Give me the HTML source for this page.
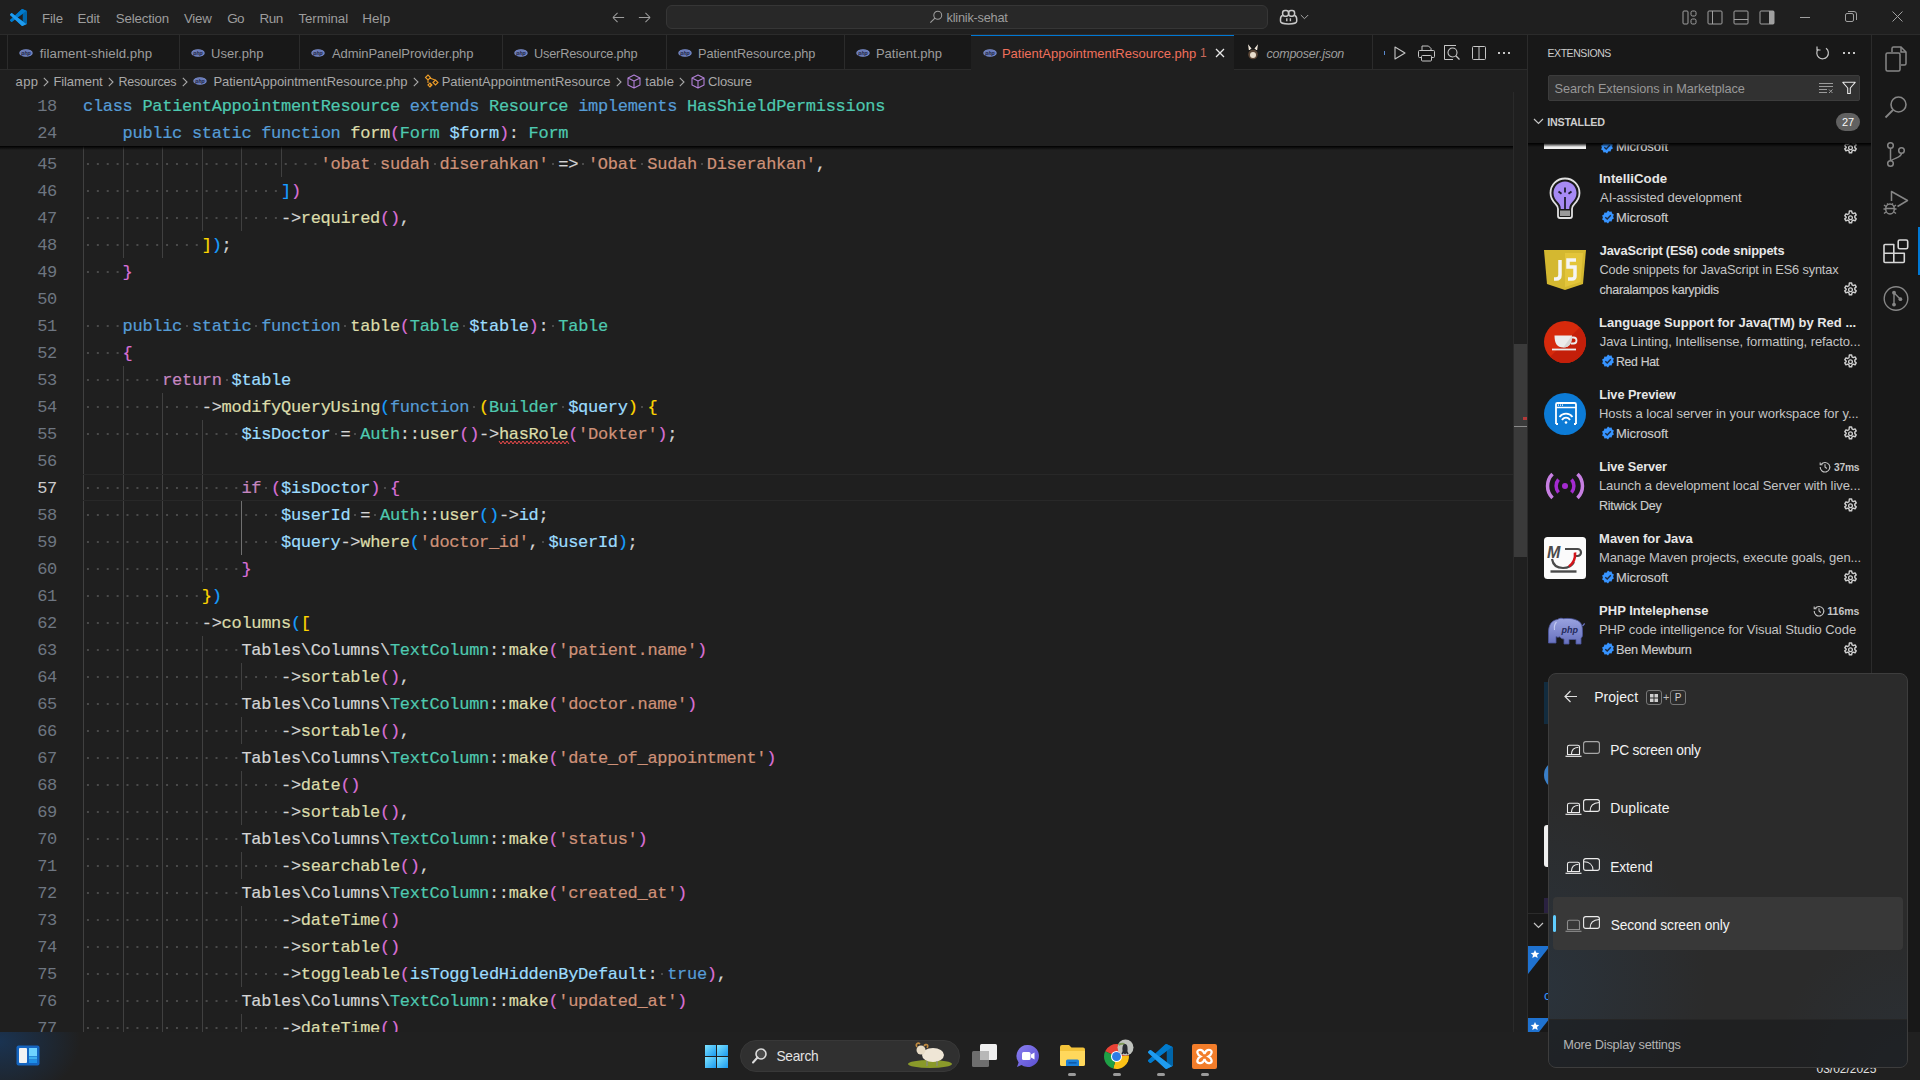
<!DOCTYPE html>
<html><head><meta charset="utf-8"><style>
*{box-sizing:border-box}
html,body{margin:0;padding:0}
body{width:1920px;height:1080px;overflow:hidden;background:#1f1f1f;position:relative;font-family:"Liberation Sans",sans-serif;color:#cccccc}
.a{position:absolute}
.code{position:absolute;left:0;height:27px;font-family:"Liberation Mono",monospace;font-size:17px;line-height:27px;letter-spacing:-0.3px;white-space:pre;-webkit-text-stroke:0.2px currentColor}
.ln{position:absolute;left:0;width:57px;text-align:right;height:27px;font-family:"Liberation Mono",monospace;font-size:17px;line-height:27px;letter-spacing:-0.3px;color:#6e7681}
.txt{position:absolute;left:83px;top:0}
.g{position:absolute;width:1px;background:#404040}
.ws{position:absolute;height:2px;background-image:linear-gradient(90deg,transparent 3.95px,#4a4a4a 3.95px,#4a4a4a 5.95px,transparent 5.95px);background-size:9.9px 2px;background-repeat:repeat-x}
svg{position:absolute;overflow:visible}
</style></head><body>
<div class="a" style="left:0;top:0;width:1920px;height:35px;background:#1f1f1f;border-bottom:1px solid #2b2b2b"></div><svg style="left:10px;top:9px" width="17" height="17" viewBox="0 0 100 100"><path fill="#0065a9" d="M96.5 10.8 75.9.9a6.2 6.2 0 0 0-7.1 1.2L29.4 38 12.2 25a4.2 4.2 0 0 0-5.3.2L1.4 30.2a4.2 4.2 0 0 0 0 6.2L16.3 50 1.4 63.6a4.2 4.2 0 0 0 0 6.2l5.5 5a4.2 4.2 0 0 0 5.3.2l17.2-13 39.4 35.9a6.2 6.2 0 0 0 7.1 1.2l20.6-9.9a6.2 6.2 0 0 0 3.5-5.6V16.4a6.2 6.2 0 0 0-3.5-5.6ZM75 72.7 45.1 50 75 27.3Z"/><path fill="#007acc" d="M96.5 10.8 75.9.9a6.2 6.2 0 0 0-7.1 1.2L1.4 63.6a4.2 4.2 0 0 0 0 6.2l5.5 5a4.2 4.2 0 0 0 5.3.2L93.4 13.5a4.2 4.2 0 0 1 6.6 3.3v-.4a6.2 6.2 0 0 0-3.5-5.6Z"/><path fill="#1f9cf0" d="M96.5 89.2 75.9 99.1a6.2 6.2 0 0 1-7.1-1.2L1.4 36.4a4.2 4.2 0 0 1 0-6.2l5.5-5a4.2 4.2 0 0 1 5.3-.2l81.2 61.5a4.2 4.2 0 0 0 6.6-3.3v.4a6.2 6.2 0 0 1-3.5 5.6Z"/></svg><div class="a" style="left:42.00px;top:19px;font-size:13.25px;line-height:0;white-space:pre;color:#9d9d9d;letter-spacing:-0.100px;">File</div><div class="a" style="left:77.60px;top:19px;font-size:13.25px;line-height:0;white-space:pre;color:#9d9d9d;letter-spacing:-0.200px;">Edit</div><div class="a" style="left:115.70px;top:19px;font-size:13.25px;line-height:0;white-space:pre;color:#9d9d9d;letter-spacing:-0.125px;">Selection</div><div class="a" style="left:184.00px;top:19px;font-size:13.25px;line-height:0;white-space:pre;color:#9d9d9d;letter-spacing:-0.233px;">View</div><div class="a" style="left:227.20px;top:19px;font-size:13.5px;line-height:0;white-space:pre;color:#9d9d9d;letter-spacing:-0.700px;">Go</div><div class="a" style="left:259.50px;top:19px;font-size:13.5px;line-height:0;white-space:pre;color:#9d9d9d;letter-spacing:-0.500px;">Run</div><div class="a" style="left:298.50px;top:19px;font-size:13.25px;line-height:0;white-space:pre;color:#9d9d9d;letter-spacing:-0.071px;">Terminal</div><div class="a" style="left:362.20px;top:19px;font-size:13.5px;line-height:0;white-space:pre;color:#9d9d9d;letter-spacing:0.067px;">Help</div><svg style="left:611px;top:10px" width="15" height="15" viewBox="0 0 16 16"><path d="M2 8h12M2 8l5-5M2 8l5 5" stroke="#9d9d9d" stroke-width="1.1" fill="none"/></svg><svg style="left:637px;top:10px" width="15" height="15" viewBox="0 0 16 16"><path d="M14 8H2M14 8l-5-5M14 8l-5 5" stroke="#9d9d9d" stroke-width="1.1" fill="none"/></svg><div class="a" style="left:666px;top:5px;width:602px;height:24px;background:#282828;border:1px solid #363636;border-radius:6px"></div><svg style="left:929px;top:10px" width="14" height="14" viewBox="0 0 16 16"><circle cx="10" cy="6" r="4.5" stroke="#9d9d9d" stroke-width="1.2" fill="none"/><path d="M6.8 9.2 1.5 14.5" stroke="#9d9d9d" stroke-width="1.3"/></svg><div class="a" style="left:946.60px;top:18px;font-size:12.75px;line-height:0;white-space:pre;color:#9d9d9d;letter-spacing:-0.236px;">klinik-sehat</div><svg style="left:1279px;top:9px" width="20" height="17" viewBox="0 0 20 17"><rect x="3.6" y="1.6" width="6" height="5.6" rx="2.4" stroke="#c8c8c8" stroke-width="1.5" fill="none"/><rect x="9.6" y="1.6" width="6" height="5.6" rx="2.4" stroke="#c8c8c8" stroke-width="1.5" fill="none"/><path d="M3.6 6.5C2 7 1.5 8.5 1.5 10v2.2c0 1.6 3.8 2.8 8.1 2.8s8.1-1.2 8.1-2.8V10c0-1.5-.5-3-2.1-3.5" stroke="#c8c8c8" stroke-width="1.5" fill="none"/><path d="M7.8 9.2v3M11.4 9.2v3" stroke="#c8c8c8" stroke-width="1.4"/></svg><svg style="left:1300px;top:14px" width="9" height="6" viewBox="0 0 9 6"><path d="M.8 1l3.7 3.7L8.2 1" stroke="#a8a8a8" stroke-width="1" fill="none"/></svg><svg style="left:1682px;top:10px" width="15" height="15" viewBox="0 0 15 15"><rect x="1" y="1" width="5" height="13" rx="1" stroke="#a0a0a0" fill="none"/><rect x="9" y="1" width="5" height="5" rx="1.5" stroke="#a0a0a0" fill="none"/><rect x="9" y="9" width="5" height="5" rx="1.5" stroke="#a0a0a0" fill="none"/></svg><svg style="left:1707px;top:10px" width="16" height="15" viewBox="0 0 16 15"><rect x="1" y="1" width="14" height="13" rx="1" stroke="#a0a0a0" fill="none"/><path d="M5.5 1v13" stroke="#a0a0a0"/></svg><svg style="left:1733px;top:10px" width="16" height="15" viewBox="0 0 16 15"><rect x="1" y="1" width="14" height="13" rx="1" stroke="#a0a0a0" fill="none"/><path d="M1 9.5h14" stroke="#a0a0a0"/></svg><svg style="left:1759px;top:10px" width="16" height="15" viewBox="0 0 16 15"><rect x="1" y="1" width="14" height="13" rx="1" stroke="#a0a0a0" fill="none"/><rect x="10" y="1" width="5" height="13" fill="#a0a0a0"/></svg><div class="a" style="left:1800px;top:17px;width:10px;height:1px;background:#a0a0a0"></div><svg style="left:1845px;top:11px" width="12" height="12" viewBox="0 0 12 12"><rect x="0.5" y="2.5" width="8" height="8" rx="1.5" stroke="#a0a0a0" fill="none"/><path d="M3 .5h6a2.5 2.5 0 0 1 2.5 2.5v6" stroke="#a0a0a0" fill="none"/></svg><svg style="left:1892px;top:11px" width="11" height="11" viewBox="0 0 11 11"><path d="M.5.5l10 10M10.5.5l-10 10" stroke="#a0a0a0" stroke-width="1"/></svg><div class="a" style="left:0;top:35px;width:1528px;height:35px;background:#181818;border-bottom:1px solid #2b2b2b"></div><div class="a" style="left:7px;top:35px;width:173px;height:34px;border-left:1px solid #2b2b2b;border-right:1px solid #2b2b2b;background:#181818"></div><svg style="left:19px;top:49px" width="14" height="8" viewBox="0 0 15 9" preserveAspectRatio="none"><ellipse cx="7.5" cy="4.5" rx="7.2" ry="4.2" fill="#7b8ecb"/><ellipse cx="7.5" cy="4.5" rx="6.6" ry="3.7" fill="#6a7bb8"/><text x="7.5" y="6.3" font-size="5.5" font-family="Liberation Sans" font-style="italic" font-weight="700" text-anchor="middle" fill="#1d2340">php</text></svg><div class="a" style="left:39.80px;top:54px;font-size:13.25px;line-height:0;white-space:pre;color:#9d9d9d;letter-spacing:0.056px;">filament-shield.php</div><div class="a" style="left:179px;top:35px;width:121px;height:34px;border-left:1px solid #2b2b2b;border-right:1px solid #2b2b2b;background:#181818"></div><svg style="left:191px;top:49px" width="14" height="8" viewBox="0 0 15 9" preserveAspectRatio="none"><ellipse cx="7.5" cy="4.5" rx="7.2" ry="4.2" fill="#7b8ecb"/><ellipse cx="7.5" cy="4.5" rx="6.6" ry="3.7" fill="#6a7bb8"/><text x="7.5" y="6.3" font-size="5.5" font-family="Liberation Sans" font-style="italic" font-weight="700" text-anchor="middle" fill="#1d2340">php</text></svg><div class="a" style="left:211.00px;top:54px;font-size:13.0px;line-height:0;white-space:pre;color:#9d9d9d;letter-spacing:0.071px;">User.php</div><div class="a" style="left:299px;top:35px;width:204px;height:34px;border-left:1px solid #2b2b2b;border-right:1px solid #2b2b2b;background:#181818"></div><svg style="left:311px;top:49px" width="14" height="8" viewBox="0 0 15 9" preserveAspectRatio="none"><ellipse cx="7.5" cy="4.5" rx="7.2" ry="4.2" fill="#7b8ecb"/><ellipse cx="7.5" cy="4.5" rx="6.6" ry="3.7" fill="#6a7bb8"/><text x="7.5" y="6.3" font-size="5.5" font-family="Liberation Sans" font-style="italic" font-weight="700" text-anchor="middle" fill="#1d2340">php</text></svg><div class="a" style="left:332.00px;top:54px;font-size:13.0px;line-height:0;white-space:pre;color:#9d9d9d;letter-spacing:-0.076px;">AdminPanelProvider.php</div><div class="a" style="left:502px;top:35px;width:165px;height:34px;border-left:1px solid #2b2b2b;border-right:1px solid #2b2b2b;background:#181818"></div><svg style="left:514px;top:49px" width="14" height="8" viewBox="0 0 15 9" preserveAspectRatio="none"><ellipse cx="7.5" cy="4.5" rx="7.2" ry="4.2" fill="#7b8ecb"/><ellipse cx="7.5" cy="4.5" rx="6.6" ry="3.7" fill="#6a7bb8"/><text x="7.5" y="6.3" font-size="5.5" font-family="Liberation Sans" font-style="italic" font-weight="700" text-anchor="middle" fill="#1d2340">php</text></svg><div class="a" style="left:534.00px;top:54px;font-size:12.75px;line-height:0;white-space:pre;color:#9d9d9d;letter-spacing:-0.187px;">UserResource.php</div><div class="a" style="left:666px;top:35px;width:179px;height:34px;border-left:1px solid #2b2b2b;border-right:1px solid #2b2b2b;background:#181818"></div><svg style="left:678px;top:49px" width="14" height="8" viewBox="0 0 15 9" preserveAspectRatio="none"><ellipse cx="7.5" cy="4.5" rx="7.2" ry="4.2" fill="#7b8ecb"/><ellipse cx="7.5" cy="4.5" rx="6.6" ry="3.7" fill="#6a7bb8"/><text x="7.5" y="6.3" font-size="5.5" font-family="Liberation Sans" font-style="italic" font-weight="700" text-anchor="middle" fill="#1d2340">php</text></svg><div class="a" style="left:698.00px;top:54px;font-size:12.75px;line-height:0;white-space:pre;color:#9d9d9d;letter-spacing:-0.100px;">PatientResource.php</div><div class="a" style="left:844px;top:35px;width:128px;height:34px;border-left:1px solid #2b2b2b;border-right:1px solid #2b2b2b;background:#181818"></div><svg style="left:856px;top:49px" width="14" height="8" viewBox="0 0 15 9" preserveAspectRatio="none"><ellipse cx="7.5" cy="4.5" rx="7.2" ry="4.2" fill="#7b8ecb"/><ellipse cx="7.5" cy="4.5" rx="6.6" ry="3.7" fill="#6a7bb8"/><text x="7.5" y="6.3" font-size="5.5" font-family="Liberation Sans" font-style="italic" font-weight="700" text-anchor="middle" fill="#1d2340">php</text></svg><div class="a" style="left:875.90px;top:54px;font-size:13.0px;line-height:0;white-space:pre;color:#9d9d9d;letter-spacing:0.040px;">Patient.php</div><div class="a" style="left:971px;top:35px;width:263px;height:35px;background:#1f1f1f;border-top:1px solid #0078d4"></div><svg style="left:983px;top:49px" width="14" height="8" viewBox="0 0 15 9" preserveAspectRatio="none"><ellipse cx="7.5" cy="4.5" rx="7.2" ry="4.2" fill="#7b8ecb"/><ellipse cx="7.5" cy="4.5" rx="6.6" ry="3.7" fill="#6a7bb8"/><text x="7.5" y="6.3" font-size="5.5" font-family="Liberation Sans" font-style="italic" font-weight="700" text-anchor="middle" fill="#1d2340">php</text></svg><div class="a" style="left:1001.90px;top:54px;font-size:13.0px;line-height:0;white-space:pre;color:#f0705c;letter-spacing:-0.002px;">PatientAppointmentResource.php</div><div class="a" style="left:1200.10px;top:53px;font-size:12px;line-height:0;white-space:pre;color:#c9685a;letter-spacing:0.000px;">1</div><svg style="left:1215px;top:48px" width="10" height="10" viewBox="0 0 10 10"><path d="M1 1l8 8M9 1l-8 8" stroke="#e8e8e8" stroke-width="1.3"/></svg><div class="a" style="left:1234px;top:35px;width:139px;height:34px;border-right:1px solid #2b2b2b;background:#181818"></div><svg style="left:1247px;top:46px" width="12" height="14" viewBox="0 0 12 14"><circle cx="6" cy="8.5" r="4.8" fill="#5b4636"/><circle cx="6" cy="9" r="3" fill="#e8dccb"/><path d="M2.5 4 2 0.5 4 3M9.5 4 10 .5 8 3" stroke="#efe6da" stroke-width="1.3" fill="none"/></svg><div class="a" style="left:1266.60px;top:54px;font-size:12.5px;line-height:0;white-space:pre;color:#9d9d9d;letter-spacing:-0.262px;font-style:italic;">composer.json</div><div class="a" style="left:1384px;top:51px;width:1px;height:4px;background:#5a8ad0"></div><svg style="left:1394px;top:46px" width="12" height="14" viewBox="0 0 12 14"><path d="M1 1v12l10-6z" stroke="#c5c5c5" stroke-width="1.1" fill="none" stroke-linejoin="round"/></svg><svg style="left:1418px;top:45px" width="17" height="17" viewBox="0 0 17 17"><path d="M4 5V1h6.5L13 3.5V5" stroke="#c5c5c5" fill="none"/><rect x=".5" y="5.5" width="16" height="7" rx="1" stroke="#c5c5c5" fill="none"/><rect x="3.5" y="10.5" width="10" height="5.5" rx="1" stroke="#c5c5c5" fill="#181818"/></svg><svg style="left:1444px;top:45px" width="17" height="16" viewBox="0 0 17 16"><path d="M9 .5H.5v14H9" stroke="#c5c5c5" fill="none"/><path d="M.5 .5H12" stroke="#c5c5c5"/><circle cx="8.5" cy="7.5" r="4.5" stroke="#c5c5c5" stroke-width="1.1" fill="none"/><path d="M11.8 10.8 15.5 14.5" stroke="#c5c5c5" stroke-width="1.3"/></svg><svg style="left:1472px;top:46px" width="14" height="14" viewBox="0 0 14 14"><rect x=".5" y=".5" width="13" height="13" rx="1" stroke="#c5c5c5" fill="none"/><path d="M7 .5v13" stroke="#c5c5c5"/></svg><div class="a" style="left:1498px;top:52px;width:2px;height:2px;background:#c5c5c5"></div><div class="a" style="left:1503px;top:52px;width:2px;height:2px;background:#c5c5c5"></div><div class="a" style="left:1508px;top:52px;width:2px;height:2px;background:#c5c5c5"></div><div class="a" style="left:15.50px;top:82px;font-size:13px;line-height:0;white-space:pre;color:#a9a9a9;letter-spacing:0.400px;">app</div><svg style="left:43px;top:77px" width="6" height="10" viewBox="0 0 6 10"><path d="M.8 .8l4.2 4.2-4.2 4.2" stroke="#a9a9a9" stroke-width="1.1" fill="none"/></svg><div class="a" style="left:53.40px;top:82px;font-size:13.0px;line-height:0;white-space:pre;color:#a9a9a9;letter-spacing:-0.086px;">Filament</div><svg style="left:108px;top:77px" width="6" height="10" viewBox="0 0 6 10"><path d="M.8 .8l4.2 4.2-4.2 4.2" stroke="#a9a9a9" stroke-width="1.1" fill="none"/></svg><div class="a" style="left:118.50px;top:82px;font-size:12.5px;line-height:0;white-space:pre;color:#a9a9a9;letter-spacing:-0.225px;">Resources</div><svg style="left:182px;top:77px" width="6" height="10" viewBox="0 0 6 10"><path d="M.8 .8l4.2 4.2-4.2 4.2" stroke="#a9a9a9" stroke-width="1.1" fill="none"/></svg><svg style="left:193px;top:77px" width="14" height="8" viewBox="0 0 15 9" preserveAspectRatio="none"><ellipse cx="7.5" cy="4.5" rx="7.2" ry="4.2" fill="#7b8ecb"/><ellipse cx="7.5" cy="4.5" rx="6.6" ry="3.7" fill="#6a7bb8"/><text x="7.5" y="6.3" font-size="5.5" font-family="Liberation Sans" font-style="italic" font-weight="700" text-anchor="middle" fill="#1d2340">php</text></svg><div class="a" style="left:213.40px;top:82px;font-size:13.0px;line-height:0;white-space:pre;color:#a9a9a9;letter-spacing:-0.010px;">PatientAppointmentResource.php</div><svg style="left:412.5px;top:77px" width="6" height="10" viewBox="0 0 6 10"><path d="M.8 .8l4.2 4.2-4.2 4.2" stroke="#a9a9a9" stroke-width="1.1" fill="none"/></svg><svg style="left:424px;top:74px" width="15" height="15" viewBox="0 0 15 15"><path d="M1.5 3.5 4 1l2.5 2.5L4 6zM9 8.5l2.5-2.5L14 8.5 11.5 11zM4 11l2-2 2 2-2 2zM4 6v3m2.2-4.8 5 1.8M6 11h2" stroke="#ee9d28" stroke-width="1.1" fill="none"/></svg><div class="a" style="left:441.70px;top:82px;font-size:13.0px;line-height:0;white-space:pre;color:#a9a9a9;letter-spacing:-0.012px;">PatientAppointmentResource</div><svg style="left:616px;top:77px" width="6" height="10" viewBox="0 0 6 10"><path d="M.8 .8l4.2 4.2-4.2 4.2" stroke="#a9a9a9" stroke-width="1.1" fill="none"/></svg><svg style="left:627px;top:74px" width="14" height="15" viewBox="0 0 14 15"><path d="M7 1 1 4v7l6 3 6-3V4zM1 4l6 3 6-3M7 7v7" stroke="#b180d7" stroke-width="1.1" fill="none" stroke-linejoin="round"/></svg><div class="a" style="left:645.20px;top:82px;font-size:13.0px;line-height:0;white-space:pre;color:#a9a9a9;letter-spacing:0.125px;">table</div><svg style="left:679px;top:77px" width="6" height="10" viewBox="0 0 6 10"><path d="M.8 .8l4.2 4.2-4.2 4.2" stroke="#a9a9a9" stroke-width="1.1" fill="none"/></svg><svg style="left:691px;top:74px" width="14" height="15" viewBox="0 0 14 15"><path d="M7 1 1 4v7l6 3 6-3V4zM1 4l6 3 6-3M7 7v7" stroke="#b180d7" stroke-width="1.1" fill="none" stroke-linejoin="round"/></svg><div class="a" style="left:707.90px;top:82px;font-size:13.0px;line-height:0;white-space:pre;color:#a9a9a9;letter-spacing:-0.133px;">Closure</div><div class="a" style="left:0;top:92px;width:1513px;height:940px;overflow:hidden"><div class="g" style="left:83.0px;top:54px;height:31px;background:#404040"></div><div class="g" style="left:122.6px;top:54px;height:31px;background:#404040"></div><div class="g" style="left:162.2px;top:54px;height:31px;background:#404040"></div><div class="g" style="left:201.8px;top:54px;height:31px;background:#404040"></div><div class="g" style="left:241.4px;top:54px;height:31px;background:#404040"></div><div class="g" style="left:281.0px;top:54px;height:31px;background:#404040"></div><div class="ws" style="left:83.0px;top:71px;width:237.6px"></div><div class="ws" style="left:370.1px;top:71px;width:9.9px"></div><div class="ws" style="left:429.5px;top:71px;width:9.9px"></div><div class="ws" style="left:548.3px;top:71px;width:9.9px"></div><div class="ws" style="left:578.0px;top:71px;width:9.9px"></div><div class="ws" style="left:637.4px;top:71px;width:9.9px"></div><div class="ws" style="left:696.8px;top:71px;width:9.9px"></div><div class="ln" style="top:59px;color:#6e7681">45</div><div class="code" style="left:320.6px;top:59px"><span style="color:#ce9178">'obat sudah diserahkan'</span><span style="color:#d4d4d4"> =&gt; </span><span style="color:#ce9178">'Obat Sudah Diserahkan'</span><span style="color:#d4d4d4">,</span></div><div class="g" style="left:83.0px;top:85px;height:27px;background:#404040"></div><div class="g" style="left:122.6px;top:85px;height:27px;background:#404040"></div><div class="g" style="left:162.2px;top:85px;height:27px;background:#404040"></div><div class="g" style="left:201.8px;top:85px;height:27px;background:#404040"></div><div class="g" style="left:241.4px;top:85px;height:27px;background:#404040"></div><div class="ws" style="left:83.0px;top:98px;width:198.0px"></div><div class="ln" style="top:86px;color:#6e7681">46</div><div class="code" style="left:281.0px;top:86px"><span style="color:#179fff">]</span><span style="color:#da70d6">)</span></div><div class="g" style="left:83.0px;top:112px;height:27px;background:#404040"></div><div class="g" style="left:122.6px;top:112px;height:27px;background:#404040"></div><div class="g" style="left:162.2px;top:112px;height:27px;background:#404040"></div><div class="g" style="left:201.8px;top:112px;height:27px;background:#404040"></div><div class="g" style="left:241.4px;top:112px;height:27px;background:#404040"></div><div class="ws" style="left:83.0px;top:125px;width:198.0px"></div><div class="ln" style="top:113px;color:#6e7681">47</div><div class="code" style="left:281.0px;top:113px"><span style="color:#d4d4d4">-&gt;</span><span style="color:#dcdcaa">required</span><span style="color:#da70d6">()</span><span style="color:#d4d4d4">,</span></div><div class="g" style="left:83.0px;top:139px;height:27px;background:#404040"></div><div class="g" style="left:122.6px;top:139px;height:27px;background:#404040"></div><div class="g" style="left:162.2px;top:139px;height:27px;background:#404040"></div><div class="ws" style="left:83.0px;top:152px;width:118.8px"></div><div class="ln" style="top:140px;color:#6e7681">48</div><div class="code" style="left:201.8px;top:140px"><span style="color:#ffd700">]</span><span style="color:#179fff">)</span><span style="color:#d4d4d4">;</span></div><div class="g" style="left:83.0px;top:166px;height:27px;background:#404040"></div><div class="ws" style="left:83.0px;top:179px;width:39.6px"></div><div class="ln" style="top:167px;color:#6e7681">49</div><div class="code" style="left:122.6px;top:167px"><span style="color:#da70d6">}</span></div><div class="g" style="left:83.0px;top:193px;height:27px;background:#404040"></div><div class="ln" style="top:194px;color:#6e7681">50</div><div class="code" style="left:83.0px;top:194px"></div><div class="g" style="left:83.0px;top:220px;height:27px;background:#404040"></div><div class="ws" style="left:83.0px;top:233px;width:39.6px"></div><div class="ws" style="left:182.0px;top:233px;width:9.9px"></div><div class="ws" style="left:251.3px;top:233px;width:9.9px"></div><div class="ws" style="left:340.4px;top:233px;width:9.9px"></div><div class="ws" style="left:459.2px;top:233px;width:9.9px"></div><div class="ws" style="left:548.3px;top:233px;width:9.9px"></div><div class="ln" style="top:221px;color:#6e7681">51</div><div class="code" style="left:122.6px;top:221px"><span style="color:#569cd6">public static function </span><span style="color:#dcdcaa">table</span><span style="color:#da70d6">(</span><span style="color:#4ec9b0">Table </span><span style="color:#9cdcfe">$table</span><span style="color:#da70d6">)</span><span style="color:#d4d4d4">: </span><span style="color:#4ec9b0">Table</span></div><div class="g" style="left:83.0px;top:247px;height:27px;background:#404040"></div><div class="ws" style="left:83.0px;top:260px;width:39.6px"></div><div class="ln" style="top:248px;color:#6e7681">52</div><div class="code" style="left:122.6px;top:248px"><span style="color:#da70d6">{</span></div><div class="g" style="left:83.0px;top:274px;height:27px;background:#404040"></div><div class="g" style="left:122.6px;top:274px;height:27px;background:#404040"></div><div class="ws" style="left:83.0px;top:287px;width:79.2px"></div><div class="ws" style="left:221.6px;top:287px;width:9.9px"></div><div class="ln" style="top:275px;color:#6e7681">53</div><div class="code" style="left:162.2px;top:275px"><span style="color:#c586c0">return </span><span style="color:#9cdcfe">$table</span></div><div class="g" style="left:83.0px;top:301px;height:27px;background:#404040"></div><div class="g" style="left:122.6px;top:301px;height:27px;background:#404040"></div><div class="g" style="left:162.2px;top:301px;height:27px;background:#404040"></div><div class="ws" style="left:83.0px;top:314px;width:118.8px"></div><div class="ws" style="left:469.1px;top:314px;width:9.9px"></div><div class="ws" style="left:558.2px;top:314px;width:9.9px"></div><div class="ws" style="left:637.4px;top:314px;width:9.9px"></div><div class="ln" style="top:302px;color:#6e7681">54</div><div class="code" style="left:201.8px;top:302px"><span style="color:#d4d4d4">-&gt;</span><span style="color:#dcdcaa">modifyQueryUsing</span><span style="color:#179fff">(</span><span style="color:#569cd6">function </span><span style="color:#ffd700">(</span><span style="color:#4ec9b0">Builder </span><span style="color:#9cdcfe">$query</span><span style="color:#ffd700">)</span><span style="color:#d4d4d4"> </span><span style="color:#ffd700">{</span></div><div class="g" style="left:83.0px;top:328px;height:27px;background:#404040"></div><div class="g" style="left:122.6px;top:328px;height:27px;background:#404040"></div><div class="g" style="left:162.2px;top:328px;height:27px;background:#404040"></div><div class="g" style="left:201.8px;top:328px;height:27px;background:#404040"></div><div class="ws" style="left:83.0px;top:341px;width:158.4px"></div><div class="ws" style="left:330.5px;top:341px;width:9.9px"></div><div class="ws" style="left:350.3px;top:341px;width:9.9px"></div><div class="ln" style="top:329px;color:#6e7681">55</div><div class="code" style="left:241.4px;top:329px"><span style="color:#9cdcfe">$isDoctor</span><span style="color:#d4d4d4"> = </span><span style="color:#4ec9b0">Auth</span><span style="color:#d4d4d4">::</span><span style="color:#dcdcaa">user</span><span style="color:#da70d6">()</span><span style="color:#d4d4d4">-&gt;</span><span style="color:#dcdcaa">hasRole</span><span style="color:#da70d6">(</span><span style="color:#ce9178">'Dokter'</span><span style="color:#da70d6">)</span><span style="color:#d4d4d4">;</span></div><div class="g" style="left:83.0px;top:355px;height:27px;background:#404040"></div><div class="g" style="left:122.6px;top:355px;height:27px;background:#404040"></div><div class="g" style="left:162.2px;top:355px;height:27px;background:#404040"></div><div class="g" style="left:201.8px;top:355px;height:27px;background:#404040"></div><div class="ln" style="top:356px;color:#6e7681">56</div><div class="code" style="left:83.0px;top:356px"></div><div class="g" style="left:83.0px;top:382px;height:27px;background:#404040"></div><div class="g" style="left:122.6px;top:382px;height:27px;background:#404040"></div><div class="g" style="left:162.2px;top:382px;height:27px;background:#404040"></div><div class="g" style="left:201.8px;top:382px;height:27px;background:#404040"></div><div class="ws" style="left:83.0px;top:395px;width:158.4px"></div><div class="ws" style="left:261.2px;top:395px;width:9.9px"></div><div class="ws" style="left:380.0px;top:395px;width:9.9px"></div><div class="ln" style="top:383px;color:#cccccc">57</div><div class="code" style="left:241.4px;top:383px"><span style="color:#c586c0">if </span><span style="color:#da70d6">(</span><span style="color:#9cdcfe">$isDoctor</span><span style="color:#da70d6">)</span><span style="color:#d4d4d4"> </span><span style="color:#da70d6">{</span></div><div class="g" style="left:83.0px;top:409px;height:27px;background:#404040"></div><div class="g" style="left:122.6px;top:409px;height:27px;background:#404040"></div><div class="g" style="left:162.2px;top:409px;height:27px;background:#404040"></div><div class="g" style="left:201.8px;top:409px;height:27px;background:#404040"></div><div class="g" style="left:241.4px;top:409px;height:27px;background:#707070"></div><div class="ws" style="left:83.0px;top:422px;width:198.0px"></div><div class="ws" style="left:350.3px;top:422px;width:9.9px"></div><div class="ws" style="left:370.1px;top:422px;width:9.9px"></div><div class="ln" style="top:410px;color:#6e7681">58</div><div class="code" style="left:281.0px;top:410px"><span style="color:#9cdcfe">$userId</span><span style="color:#d4d4d4"> = </span><span style="color:#4ec9b0">Auth</span><span style="color:#d4d4d4">::</span><span style="color:#dcdcaa">user</span><span style="color:#179fff">()</span><span style="color:#d4d4d4">-&gt;</span><span style="color:#9cdcfe">id</span><span style="color:#d4d4d4">;</span></div><div class="g" style="left:83.0px;top:436px;height:27px;background:#404040"></div><div class="g" style="left:122.6px;top:436px;height:27px;background:#404040"></div><div class="g" style="left:162.2px;top:436px;height:27px;background:#404040"></div><div class="g" style="left:201.8px;top:436px;height:27px;background:#404040"></div><div class="g" style="left:241.4px;top:436px;height:27px;background:#707070"></div><div class="ws" style="left:83.0px;top:449px;width:198.0px"></div><div class="ws" style="left:538.4px;top:449px;width:9.9px"></div><div class="ln" style="top:437px;color:#6e7681">59</div><div class="code" style="left:281.0px;top:437px"><span style="color:#9cdcfe">$query</span><span style="color:#d4d4d4">-&gt;</span><span style="color:#dcdcaa">where</span><span style="color:#179fff">(</span><span style="color:#ce9178">'doctor_id'</span><span style="color:#d4d4d4">, </span><span style="color:#9cdcfe">$userId</span><span style="color:#179fff">)</span><span style="color:#d4d4d4">;</span></div><div class="g" style="left:83.0px;top:463px;height:27px;background:#404040"></div><div class="g" style="left:122.6px;top:463px;height:27px;background:#404040"></div><div class="g" style="left:162.2px;top:463px;height:27px;background:#404040"></div><div class="g" style="left:201.8px;top:463px;height:27px;background:#404040"></div><div class="ws" style="left:83.0px;top:476px;width:158.4px"></div><div class="ln" style="top:464px;color:#6e7681">60</div><div class="code" style="left:241.4px;top:464px"><span style="color:#da70d6">}</span></div><div class="g" style="left:83.0px;top:490px;height:27px;background:#404040"></div><div class="g" style="left:122.6px;top:490px;height:27px;background:#404040"></div><div class="g" style="left:162.2px;top:490px;height:27px;background:#404040"></div><div class="ws" style="left:83.0px;top:503px;width:118.8px"></div><div class="ln" style="top:491px;color:#6e7681">61</div><div class="code" style="left:201.8px;top:491px"><span style="color:#ffd700">}</span><span style="color:#179fff">)</span></div><div class="g" style="left:83.0px;top:517px;height:27px;background:#404040"></div><div class="g" style="left:122.6px;top:517px;height:27px;background:#404040"></div><div class="g" style="left:162.2px;top:517px;height:27px;background:#404040"></div><div class="ws" style="left:83.0px;top:530px;width:118.8px"></div><div class="ln" style="top:518px;color:#6e7681">62</div><div class="code" style="left:201.8px;top:518px"><span style="color:#d4d4d4">-&gt;</span><span style="color:#dcdcaa">columns</span><span style="color:#179fff">(</span><span style="color:#ffd700">[</span></div><div class="g" style="left:83.0px;top:544px;height:27px;background:#404040"></div><div class="g" style="left:122.6px;top:544px;height:27px;background:#404040"></div><div class="g" style="left:162.2px;top:544px;height:27px;background:#404040"></div><div class="g" style="left:201.8px;top:544px;height:27px;background:#404040"></div><div class="ws" style="left:83.0px;top:557px;width:158.4px"></div><div class="ln" style="top:545px;color:#6e7681">63</div><div class="code" style="left:241.4px;top:545px"><span style="color:#d4d4d4">Tables\Columns\</span><span style="color:#4ec9b0">TextColumn</span><span style="color:#d4d4d4">::</span><span style="color:#dcdcaa">make</span><span style="color:#da70d6">(</span><span style="color:#ce9178">'patient.name'</span><span style="color:#da70d6">)</span></div><div class="g" style="left:83.0px;top:571px;height:27px;background:#404040"></div><div class="g" style="left:122.6px;top:571px;height:27px;background:#404040"></div><div class="g" style="left:162.2px;top:571px;height:27px;background:#404040"></div><div class="g" style="left:201.8px;top:571px;height:27px;background:#404040"></div><div class="g" style="left:241.4px;top:571px;height:27px;background:#404040"></div><div class="ws" style="left:83.0px;top:584px;width:198.0px"></div><div class="ln" style="top:572px;color:#6e7681">64</div><div class="code" style="left:281.0px;top:572px"><span style="color:#d4d4d4">-&gt;</span><span style="color:#dcdcaa">sortable</span><span style="color:#da70d6">()</span><span style="color:#d4d4d4">,</span></div><div class="g" style="left:83.0px;top:598px;height:27px;background:#404040"></div><div class="g" style="left:122.6px;top:598px;height:27px;background:#404040"></div><div class="g" style="left:162.2px;top:598px;height:27px;background:#404040"></div><div class="g" style="left:201.8px;top:598px;height:27px;background:#404040"></div><div class="ws" style="left:83.0px;top:611px;width:158.4px"></div><div class="ln" style="top:599px;color:#6e7681">65</div><div class="code" style="left:241.4px;top:599px"><span style="color:#d4d4d4">Tables\Columns\</span><span style="color:#4ec9b0">TextColumn</span><span style="color:#d4d4d4">::</span><span style="color:#dcdcaa">make</span><span style="color:#da70d6">(</span><span style="color:#ce9178">'doctor.name'</span><span style="color:#da70d6">)</span></div><div class="g" style="left:83.0px;top:625px;height:27px;background:#404040"></div><div class="g" style="left:122.6px;top:625px;height:27px;background:#404040"></div><div class="g" style="left:162.2px;top:625px;height:27px;background:#404040"></div><div class="g" style="left:201.8px;top:625px;height:27px;background:#404040"></div><div class="g" style="left:241.4px;top:625px;height:27px;background:#404040"></div><div class="ws" style="left:83.0px;top:638px;width:198.0px"></div><div class="ln" style="top:626px;color:#6e7681">66</div><div class="code" style="left:281.0px;top:626px"><span style="color:#d4d4d4">-&gt;</span><span style="color:#dcdcaa">sortable</span><span style="color:#da70d6">()</span><span style="color:#d4d4d4">,</span></div><div class="g" style="left:83.0px;top:652px;height:27px;background:#404040"></div><div class="g" style="left:122.6px;top:652px;height:27px;background:#404040"></div><div class="g" style="left:162.2px;top:652px;height:27px;background:#404040"></div><div class="g" style="left:201.8px;top:652px;height:27px;background:#404040"></div><div class="ws" style="left:83.0px;top:665px;width:158.4px"></div><div class="ln" style="top:653px;color:#6e7681">67</div><div class="code" style="left:241.4px;top:653px"><span style="color:#d4d4d4">Tables\Columns\</span><span style="color:#4ec9b0">TextColumn</span><span style="color:#d4d4d4">::</span><span style="color:#dcdcaa">make</span><span style="color:#da70d6">(</span><span style="color:#ce9178">'date_of_appointment'</span><span style="color:#da70d6">)</span></div><div class="g" style="left:83.0px;top:679px;height:27px;background:#404040"></div><div class="g" style="left:122.6px;top:679px;height:27px;background:#404040"></div><div class="g" style="left:162.2px;top:679px;height:27px;background:#404040"></div><div class="g" style="left:201.8px;top:679px;height:27px;background:#404040"></div><div class="g" style="left:241.4px;top:679px;height:27px;background:#404040"></div><div class="ws" style="left:83.0px;top:692px;width:198.0px"></div><div class="ln" style="top:680px;color:#6e7681">68</div><div class="code" style="left:281.0px;top:680px"><span style="color:#d4d4d4">-&gt;</span><span style="color:#dcdcaa">date</span><span style="color:#da70d6">()</span></div><div class="g" style="left:83.0px;top:706px;height:27px;background:#404040"></div><div class="g" style="left:122.6px;top:706px;height:27px;background:#404040"></div><div class="g" style="left:162.2px;top:706px;height:27px;background:#404040"></div><div class="g" style="left:201.8px;top:706px;height:27px;background:#404040"></div><div class="g" style="left:241.4px;top:706px;height:27px;background:#404040"></div><div class="ws" style="left:83.0px;top:719px;width:198.0px"></div><div class="ln" style="top:707px;color:#6e7681">69</div><div class="code" style="left:281.0px;top:707px"><span style="color:#d4d4d4">-&gt;</span><span style="color:#dcdcaa">sortable</span><span style="color:#da70d6">()</span><span style="color:#d4d4d4">,</span></div><div class="g" style="left:83.0px;top:733px;height:27px;background:#404040"></div><div class="g" style="left:122.6px;top:733px;height:27px;background:#404040"></div><div class="g" style="left:162.2px;top:733px;height:27px;background:#404040"></div><div class="g" style="left:201.8px;top:733px;height:27px;background:#404040"></div><div class="ws" style="left:83.0px;top:746px;width:158.4px"></div><div class="ln" style="top:734px;color:#6e7681">70</div><div class="code" style="left:241.4px;top:734px"><span style="color:#d4d4d4">Tables\Columns\</span><span style="color:#4ec9b0">TextColumn</span><span style="color:#d4d4d4">::</span><span style="color:#dcdcaa">make</span><span style="color:#da70d6">(</span><span style="color:#ce9178">'status'</span><span style="color:#da70d6">)</span></div><div class="g" style="left:83.0px;top:760px;height:27px;background:#404040"></div><div class="g" style="left:122.6px;top:760px;height:27px;background:#404040"></div><div class="g" style="left:162.2px;top:760px;height:27px;background:#404040"></div><div class="g" style="left:201.8px;top:760px;height:27px;background:#404040"></div><div class="g" style="left:241.4px;top:760px;height:27px;background:#404040"></div><div class="ws" style="left:83.0px;top:773px;width:198.0px"></div><div class="ln" style="top:761px;color:#6e7681">71</div><div class="code" style="left:281.0px;top:761px"><span style="color:#d4d4d4">-&gt;</span><span style="color:#dcdcaa">searchable</span><span style="color:#da70d6">()</span><span style="color:#d4d4d4">,</span></div><div class="g" style="left:83.0px;top:787px;height:27px;background:#404040"></div><div class="g" style="left:122.6px;top:787px;height:27px;background:#404040"></div><div class="g" style="left:162.2px;top:787px;height:27px;background:#404040"></div><div class="g" style="left:201.8px;top:787px;height:27px;background:#404040"></div><div class="ws" style="left:83.0px;top:800px;width:158.4px"></div><div class="ln" style="top:788px;color:#6e7681">72</div><div class="code" style="left:241.4px;top:788px"><span style="color:#d4d4d4">Tables\Columns\</span><span style="color:#4ec9b0">TextColumn</span><span style="color:#d4d4d4">::</span><span style="color:#dcdcaa">make</span><span style="color:#da70d6">(</span><span style="color:#ce9178">'created_at'</span><span style="color:#da70d6">)</span></div><div class="g" style="left:83.0px;top:814px;height:27px;background:#404040"></div><div class="g" style="left:122.6px;top:814px;height:27px;background:#404040"></div><div class="g" style="left:162.2px;top:814px;height:27px;background:#404040"></div><div class="g" style="left:201.8px;top:814px;height:27px;background:#404040"></div><div class="g" style="left:241.4px;top:814px;height:27px;background:#404040"></div><div class="ws" style="left:83.0px;top:827px;width:198.0px"></div><div class="ln" style="top:815px;color:#6e7681">73</div><div class="code" style="left:281.0px;top:815px"><span style="color:#d4d4d4">-&gt;</span><span style="color:#dcdcaa">dateTime</span><span style="color:#da70d6">()</span></div><div class="g" style="left:83.0px;top:841px;height:27px;background:#404040"></div><div class="g" style="left:122.6px;top:841px;height:27px;background:#404040"></div><div class="g" style="left:162.2px;top:841px;height:27px;background:#404040"></div><div class="g" style="left:201.8px;top:841px;height:27px;background:#404040"></div><div class="g" style="left:241.4px;top:841px;height:27px;background:#404040"></div><div class="ws" style="left:83.0px;top:854px;width:198.0px"></div><div class="ln" style="top:842px;color:#6e7681">74</div><div class="code" style="left:281.0px;top:842px"><span style="color:#d4d4d4">-&gt;</span><span style="color:#dcdcaa">sortable</span><span style="color:#da70d6">()</span></div><div class="g" style="left:83.0px;top:868px;height:27px;background:#404040"></div><div class="g" style="left:122.6px;top:868px;height:27px;background:#404040"></div><div class="g" style="left:162.2px;top:868px;height:27px;background:#404040"></div><div class="g" style="left:201.8px;top:868px;height:27px;background:#404040"></div><div class="g" style="left:241.4px;top:868px;height:27px;background:#404040"></div><div class="ws" style="left:83.0px;top:881px;width:198.0px"></div><div class="ws" style="left:657.2px;top:881px;width:9.9px"></div><div class="ln" style="top:869px;color:#6e7681">75</div><div class="code" style="left:281.0px;top:869px"><span style="color:#d4d4d4">-&gt;</span><span style="color:#dcdcaa">toggleable</span><span style="color:#da70d6">(</span><span style="color:#9cdcfe">isToggledHiddenByDefault</span><span style="color:#d4d4d4">: </span><span style="color:#569cd6">true</span><span style="color:#da70d6">)</span><span style="color:#d4d4d4">,</span></div><div class="g" style="left:83.0px;top:895px;height:27px;background:#404040"></div><div class="g" style="left:122.6px;top:895px;height:27px;background:#404040"></div><div class="g" style="left:162.2px;top:895px;height:27px;background:#404040"></div><div class="g" style="left:201.8px;top:895px;height:27px;background:#404040"></div><div class="ws" style="left:83.0px;top:908px;width:158.4px"></div><div class="ln" style="top:896px;color:#6e7681">76</div><div class="code" style="left:241.4px;top:896px"><span style="color:#d4d4d4">Tables\Columns\</span><span style="color:#4ec9b0">TextColumn</span><span style="color:#d4d4d4">::</span><span style="color:#dcdcaa">make</span><span style="color:#da70d6">(</span><span style="color:#ce9178">'updated_at'</span><span style="color:#da70d6">)</span></div><div class="g" style="left:83.0px;top:922px;height:27px;background:#404040"></div><div class="g" style="left:122.6px;top:922px;height:27px;background:#404040"></div><div class="g" style="left:162.2px;top:922px;height:27px;background:#404040"></div><div class="g" style="left:201.8px;top:922px;height:27px;background:#404040"></div><div class="g" style="left:241.4px;top:922px;height:27px;background:#404040"></div><div class="ws" style="left:83.0px;top:935px;width:198.0px"></div><div class="ln" style="top:923px;color:#6e7681">77</div><div class="code" style="left:281.0px;top:923px"><span style="color:#d4d4d4">-&gt;</span><span style="color:#dcdcaa">dateTime</span><span style="color:#da70d6">()</span></div><div class="a" style="left:83px;top:382px;width:1430px;height:27px;border-top:1px solid #282828;border-bottom:1px solid #282828"></div><svg style="left:498.8px;top:349px" width="69.3" height="4" viewBox="0 0 69.3 4"><path d="M0 0 L2 3 L4 0 L6 3 L8 0 L10 3 L12 0 L14 3 L16 0 L18 3 L20 0 L22 3 L24 0 L26 3 L28 0 L30 3 L32 0 L34 3 L36 0 L38 3 L40 0 L42 3 L44 0 L46 3 L48 0 L50 3 L52 0 L54 3 L56 0 L58 3 L60 0 L62 3 L64 0 L66 3 L68 0 L70 3 " stroke="#f14c4c" stroke-width="1" fill="none"/></svg><div class="a" style="left:0;top:0;width:1513px;height:54px;background:#1f1f1f"></div><div class="a" style="left:0;top:54px;width:1513px;height:4px;background:linear-gradient(#000000,rgba(0,0,0,0))"></div><div class="ln" style="top:1px">18</div><div class="code" style="left:83px;top:1px"><span style="color:#569cd6">class </span><span style="color:#4ec9b0">PatientAppointmentResource </span><span style="color:#569cd6">extends </span><span style="color:#4ec9b0">Resource </span><span style="color:#569cd6">implements </span><span style="color:#4ec9b0">HasShieldPermissions</span></div><div class="ln" style="top:28px">24</div><div class="code" style="left:122.6px;top:28px"><span style="color:#569cd6">public static function </span><span style="color:#dcdcaa">form</span><span style="color:#da70d6">(</span><span style="color:#4ec9b0">Form </span><span style="color:#9cdcfe">$form</span><span style="color:#da70d6">)</span><span style="color:#d4d4d4">: </span><span style="color:#4ec9b0">Form</span></div></div><div class="a" style="left:1513px;top:92px;width:15px;height:940px;background:#1f1f1f;border-left:1px solid #2a2a2a"></div><div class="a" style="left:1514px;top:344px;width:13px;height:213px;background:#3a3a3a"></div><div class="a" style="left:1523px;top:417px;width:4px;height:3px;background:#b33a3a"></div><div class="a" style="left:1514px;top:426px;width:13px;height:1px;background:#8a8a8a"></div><div class="a" style="left:1527px;top:35px;width:345px;height:997px;background:#181818;border-left:1px solid #2b2b2b;border-right:1px solid #2b2b2b"></div><div class="a" style="left:1547.50px;top:53px;font-size:10.5px;line-height:0;white-space:pre;color:#cccccc;letter-spacing:-0.433px;">EXTENSIONS</div><svg style="left:1815px;top:45px" width="15" height="16" viewBox="0 0 15 16"><path d="M3.2 4.2A5.8 5.8 0 1 0 11 3.3" stroke="#c5c5c5" stroke-width="1.2" fill="none"/><path d="M2 1.5v3.5h3.5" stroke="#c5c5c5" stroke-width="1.2" fill="none"/></svg><div class="a" style="left:1843px;top:52px;width:2px;height:2px;background:#c5c5c5"></div><div class="a" style="left:1848px;top:52px;width:2px;height:2px;background:#c5c5c5"></div><div class="a" style="left:1853px;top:52px;width:2px;height:2px;background:#c5c5c5"></div><div class="a" style="left:1548px;top:75px;width:312px;height:26px;background:#313131;border:1px solid #3c3c3c;border-radius:2px"></div><div class="a" style="left:1554.50px;top:89px;font-size:12.75px;line-height:0;white-space:pre;color:#989898;letter-spacing:-0.077px;">Search Extensions in Marketplace</div><svg style="left:1819px;top:82px" width="15" height="12" viewBox="0 0 15 12"><path d="M0 1.5h14M0 4.5h14M0 7.5h8M0 10.5h8" stroke="#9a9a9a" stroke-width="1"/><path d="M10 7.5l3.5 3.5M13.5 7.5 10 11" stroke="#9a9a9a" stroke-width="1"/></svg><svg style="left:1842px;top:81px" width="14" height="14" viewBox="0 0 14 14"><path d="M.8 1.3h12.4L8.3 7v5.5H5.7V7z" stroke="#e6e6e6" stroke-width="1.1" fill="none" stroke-linejoin="round"/></svg><svg style="left:1533px;top:118px" width="11" height="7" viewBox="0 0 11 7"><path d="M1 1l4.5 4.5L10 1" stroke="#c5c5c5" stroke-width="1.2" fill="none"/></svg><div class="a" style="left:1547.30px;top:122px;font-size:10.75px;line-height:0;white-space:pre;color:#cccccc;letter-spacing:-0.237px;font-weight:700;">INSTALLED</div><div class="a" style="left:1836px;top:113px;width:24px;height:18px;border-radius:9px;background:#616161;color:#f8f8f8;font-size:11px;line-height:18px;text-align:center">27</div><div class="a" style="left:1528px;top:143px;width:343px;height:889px;overflow:hidden"><div class="a" style="left:16px;top:0px;width:42px;height:6px;background:#f0f0f0"></div><svg style="left:72px;top:-3px" width="14" height="14" viewBox="0 0 14 14"><path d="M7 .5l1.6 1.3 2-.2.5 2 1.8 1-.8 1.9.8 1.9-1.8 1-.5 2-2-.2L7 13.5l-1.6-1.3-2 .2-.5-2-1.8-1 .8-1.9L1.1 5.6l1.8-1 .5-2 2 .2z" fill="#3794ff"/><path d="M4.3 7.2 6.2 9l3.6-3.8" stroke="#1b2a40" stroke-width="1.4" fill="none"/></svg><div class="a" style="left:87.90px;top:4px;font-size:13.0px;line-height:0;white-space:pre;color:#cccccc;letter-spacing:-0.062px;-webkit-text-stroke:0.15px #cccccc">Microsoft</div><svg style="left:315px;top:-3px" width="15" height="15" viewBox="0 0 16 16"><path d="M6.8 1h2.4l.4 2 1.4.8 1.9-.7 1.2 2.1-1.5 1.3v1.6l1.5 1.3-1.2 2.1-1.9-.7-1.4.8-.4 2H6.8l-.4-2-1.4-.8-1.9.7-1.2-2.1 1.5-1.3V7.5L1.9 6.2l1.2-2.1 1.9.7 1.4-.8z" stroke="#d0d0d0" stroke-width="1.5" fill="none" stroke-linejoin="round"/><circle cx="8" cy="8.3" r="2" stroke="#d0d0d0" stroke-width="1.4" fill="none"/></svg><div class="a" style="left:16px;top:34px;width:42px;height:42px"><svg width="42" height="42" viewBox="0 0 42 42"><path d="M21 1.5c-8 0-14.5 6.3-14.5 14.5 0 5 2.5 8.3 5 10.8 1.6 1.6 2.5 3.2 2.5 5.2V39a2 2 0 0 0 2 2h10a2 2 0 0 0 2-2v-7c0-2 .9-3.6 2.5-5.2 2.5-2.5 5-5.8 5-10.8C35.5 7.8 29 1.5 21 1.5z" fill="#1a1a1a" stroke="#e0e0e0" stroke-width="1.8"/><path d="M21 4.5c-6.3 0-11.5 5-11.5 11.5 0 4 2 6.8 4.2 9 1.9 1.9 3 3.9 3 6.3V32h8.6v-.7c0-2.4 1.1-4.4 3-6.3 2.2-2.2 4.2-5 4.2-9C32.5 9.5 27.3 4.5 21 4.5z" fill="#a68af4"/><path d="M21 10.5v5M14.5 14.5l3 2.3M27.5 14.5l-3 2.3M21 20v12" stroke="#1e1e2e" stroke-width="1.8"/><rect x="16" y="33.5" width="10" height="5.5" fill="#9a9a9a"/></svg></div><div class="a" style="left:71.10px;top:36px;font-size:13.25px;line-height:0;white-space:pre;color:#e7e7e7;letter-spacing:0.030px;font-weight:700;">IntelliCode</div><div class="a" style="left:72.00px;top:55px;font-size:13.0px;line-height:0;white-space:pre;color:#c4c4c4;letter-spacing:-0.036px;">AI-assisted development</div><svg style="left:72.8px;top:67px" width="14" height="14" viewBox="0 0 14 14"><path d="M7 .5l1.6 1.3 2-.2.5 2 1.8 1-.8 1.9.8 1.9-1.8 1-.5 2-2-.2L7 13.5l-1.6-1.3-2 .2-.5-2-1.8-1 .8-1.9L1.1 5.6l1.8-1 .5-2 2 .2z" fill="#3794ff"/><path d="M4.3 7.2 6.2 9l3.6-3.8" stroke="#1b2a40" stroke-width="1.4" fill="none"/></svg><div class="a" style="left:87.90px;top:75px;font-size:13.0px;line-height:0;white-space:pre;color:#cccccc;letter-spacing:-0.062px;-webkit-text-stroke:0.15px #cccccc">Microsoft</div><svg style="left:315px;top:67px" width="15" height="15" viewBox="0 0 16 16"><path d="M6.8 1h2.4l.4 2 1.4.8 1.9-.7 1.2 2.1-1.5 1.3v1.6l1.5 1.3-1.2 2.1-1.9-.7-1.4.8-.4 2H6.8l-.4-2-1.4-.8-1.9.7-1.2-2.1 1.5-1.3V7.5L1.9 6.2l1.2-2.1 1.9.7 1.4-.8z" stroke="#d0d0d0" stroke-width="1.5" fill="none" stroke-linejoin="round"/><circle cx="8" cy="8.3" r="2" stroke="#d0d0d0" stroke-width="1.4" fill="none"/></svg><div class="a" style="left:16px;top:106px;width:42px;height:42px"><svg width="42" height="42" viewBox="0 0 42 42"><path d="M0 1h42l-3 34-18 6-18-6z" fill="#d4b830"/><path d="M21 4h18l-2.5 29L21 38z" fill="#e3c53a"/><path d="M16 11v15c0 3-1.5 4-4 4h-2" stroke="#f5f5f5" stroke-width="3.5" fill="none"/><path d="M32 11h-8v7h7v9c0 2-1 3-3 3h-4" stroke="#f5f5f5" stroke-width="3.5" fill="none"/></svg></div><div class="a" style="left:71.80px;top:108px;font-size:12.75px;line-height:0;white-space:pre;color:#e7e7e7;letter-spacing:-0.179px;font-weight:700;">JavaScript (ES6) code snippets</div><div class="a" style="left:71.40px;top:127px;font-size:12.75px;line-height:0;white-space:pre;color:#c4c4c4;letter-spacing:-0.129px;">Code snippets for JavaScript in ES6 syntax</div><div class="a" style="left:71.50px;top:147px;font-size:12.5px;line-height:0;white-space:pre;color:#cccccc;letter-spacing:-0.240px;-webkit-text-stroke:0.15px #cccccc">charalampos karypidis</div><svg style="left:315px;top:139px" width="15" height="15" viewBox="0 0 16 16"><path d="M6.8 1h2.4l.4 2 1.4.8 1.9-.7 1.2 2.1-1.5 1.3v1.6l1.5 1.3-1.2 2.1-1.9-.7-1.4.8-.4 2H6.8l-.4-2-1.4-.8-1.9.7-1.2-2.1 1.5-1.3V7.5L1.9 6.2l1.2-2.1 1.9.7 1.4-.8z" stroke="#d0d0d0" stroke-width="1.5" fill="none" stroke-linejoin="round"/><circle cx="8" cy="8.3" r="2" stroke="#d0d0d0" stroke-width="1.4" fill="none"/></svg><div class="a" style="left:16px;top:178px;width:42px;height:42px"><svg width="42" height="42" viewBox="0 0 42 42"><circle cx="21" cy="21" r="21" fill="#d62a0c"/><path d="M35.85 6.15A21 21 0 0 1 6.15 35.85z" fill="#c41f0a"/><path d="M10.5 14.5h17.5c0 8-2.5 12-8.75 12S10.5 22.5 10.5 14.5z" fill="#ececec"/><path d="M19.25 26.5c6.25 0 8.75-4 8.75-12z" fill="#d8d8d8"/><path d="M28 16.5h1.5a3 3 0 0 1 0 6H27" stroke="#ececec" stroke-width="1.8" fill="none"/><path d="M8 28.5h24" stroke="#ececec" stroke-width="1.8"/></svg></div><div class="a" style="left:71.10px;top:180px;font-size:13.0px;line-height:0;white-space:pre;color:#e7e7e7;letter-spacing:0.000px;font-weight:700;">Language Support for Java(TM) by Red ...</div><div class="a" style="left:71.80px;top:199px;font-size:13.0px;line-height:0;white-space:pre;color:#c4c4c4;letter-spacing:-0.076px;">Java Linting, Intellisense, formatting, refacto...</div><svg style="left:72.8px;top:211px" width="14" height="14" viewBox="0 0 14 14"><path d="M7 .5l1.6 1.3 2-.2.5 2 1.8 1-.8 1.9.8 1.9-1.8 1-.5 2-2-.2L7 13.5l-1.6-1.3-2 .2-.5-2-1.8-1 .8-1.9L1.1 5.6l1.8-1 .5-2 2 .2z" fill="#3794ff"/><path d="M4.3 7.2 6.2 9l3.6-3.8" stroke="#1b2a40" stroke-width="1.4" fill="none"/></svg><div class="a" style="left:88.00px;top:219px;font-size:12.25px;line-height:0;white-space:pre;color:#cccccc;letter-spacing:-0.300px;-webkit-text-stroke:0.15px #cccccc">Red Hat</div><svg style="left:315px;top:211px" width="15" height="15" viewBox="0 0 16 16"><path d="M6.8 1h2.4l.4 2 1.4.8 1.9-.7 1.2 2.1-1.5 1.3v1.6l1.5 1.3-1.2 2.1-1.9-.7-1.4.8-.4 2H6.8l-.4-2-1.4-.8-1.9.7-1.2-2.1 1.5-1.3V7.5L1.9 6.2l1.2-2.1 1.9.7 1.4-.8z" stroke="#d0d0d0" stroke-width="1.5" fill="none" stroke-linejoin="round"/><circle cx="8" cy="8.3" r="2" stroke="#d0d0d0" stroke-width="1.4" fill="none"/></svg><div class="a" style="left:16px;top:250px;width:42px;height:42px"><svg width="42" height="42" viewBox="0 0 42 42"><circle cx="21" cy="21" r="21" fill="#0c7bd6"/><path d="M12 31V11.5a1.5 1.5 0 0 1 1.5-1.5h17a1.5 1.5 0 0 1 1.5 1.5V31" stroke="#fff" stroke-width="1.8" fill="none"/><path d="M12 14.5h20" stroke="#fff" stroke-width="1.5"/><path d="M14 12.2h1M16 12.2h1M18 12.2h1" stroke="#fff" stroke-width="1.2"/><path d="M15.5 24a8 8 0 0 1 13 0M18 27a4.5 4.5 0 0 1 8 0" stroke="#fff" stroke-width="1.8" fill="none"/><circle cx="22" cy="29.5" r="1.3" fill="#fff"/><path d="M12 31h2M30 31h2" stroke="#fff" stroke-width="1.8"/></svg></div><div class="a" style="left:71.20px;top:252px;font-size:12.75px;line-height:0;white-space:pre;color:#e7e7e7;letter-spacing:-0.073px;font-weight:700;">Live Preview</div><div class="a" style="left:70.90px;top:271px;font-size:13.0px;line-height:0;white-space:pre;color:#c4c4c4;letter-spacing:-0.033px;">Hosts a local server in your workspace for y...</div><svg style="left:72.8px;top:283px" width="14" height="14" viewBox="0 0 14 14"><path d="M7 .5l1.6 1.3 2-.2.5 2 1.8 1-.8 1.9.8 1.9-1.8 1-.5 2-2-.2L7 13.5l-1.6-1.3-2 .2-.5-2-1.8-1 .8-1.9L1.1 5.6l1.8-1 .5-2 2 .2z" fill="#3794ff"/><path d="M4.3 7.2 6.2 9l3.6-3.8" stroke="#1b2a40" stroke-width="1.4" fill="none"/></svg><div class="a" style="left:87.90px;top:291px;font-size:13.0px;line-height:0;white-space:pre;color:#cccccc;letter-spacing:-0.062px;-webkit-text-stroke:0.15px #cccccc">Microsoft</div><svg style="left:315px;top:283px" width="15" height="15" viewBox="0 0 16 16"><path d="M6.8 1h2.4l.4 2 1.4.8 1.9-.7 1.2 2.1-1.5 1.3v1.6l1.5 1.3-1.2 2.1-1.9-.7-1.4.8-.4 2H6.8l-.4-2-1.4-.8-1.9.7-1.2-2.1 1.5-1.3V7.5L1.9 6.2l1.2-2.1 1.9.7 1.4-.8z" stroke="#d0d0d0" stroke-width="1.5" fill="none" stroke-linejoin="round"/><circle cx="8" cy="8.3" r="2" stroke="#d0d0d0" stroke-width="1.4" fill="none"/></svg><div class="a" style="left:16px;top:322px;width:42px;height:42px"><svg width="42" height="42" viewBox="0 0 42 42"><path d="M8.5 9a17 17 0 0 0 0 24M33.5 9a17 17 0 0 1 0 24" stroke="#c77fe2" stroke-width="3.5" fill="none"/><path d="M14.5 14.5a10 10 0 0 0 0 13M27.5 14.5a10 10 0 0 1 0 13" stroke="#a42bd0" stroke-width="3.5" fill="none"/><circle cx="21" cy="21" r="3" fill="#a42bd0"/></svg></div><div class="a" style="left:71.20px;top:324px;font-size:12.75px;line-height:0;white-space:pre;color:#e7e7e7;letter-spacing:-0.100px;font-weight:700;">Live Server</div><div class="a" style="left:70.90px;top:343px;font-size:13.0px;line-height:0;white-space:pre;color:#c4c4c4;letter-spacing:-0.062px;">Launch a development local Server with live...</div><div class="a" style="left:71.00px;top:363px;font-size:12.5px;line-height:0;white-space:pre;color:#cccccc;letter-spacing:-0.260px;-webkit-text-stroke:0.15px #cccccc">Ritwick Dey</div><svg style="left:315px;top:355px" width="15" height="15" viewBox="0 0 16 16"><path d="M6.8 1h2.4l.4 2 1.4.8 1.9-.7 1.2 2.1-1.5 1.3v1.6l1.5 1.3-1.2 2.1-1.9-.7-1.4.8-.4 2H6.8l-.4-2-1.4-.8-1.9.7-1.2-2.1 1.5-1.3V7.5L1.9 6.2l1.2-2.1 1.9.7 1.4-.8z" stroke="#d0d0d0" stroke-width="1.5" fill="none" stroke-linejoin="round"/><circle cx="8" cy="8.3" r="2" stroke="#d0d0d0" stroke-width="1.4" fill="none"/></svg><div class="a" style="left:306.00px;top:325px;font-size:10.25px;line-height:0;white-space:pre;color:#c5c5c5;letter-spacing:-0.233px;font-weight:700;">37ms</div><svg style="left:291.2px;top:318px" width="12" height="12" viewBox="0 0 12 12"><path d="M2.2 3.3A4.8 4.8 0 1 1 1.2 6" stroke="#c5c5c5" stroke-width="1.1" fill="none"/><path d="M1.2 1.5v2.3h2.3M6 3.3V6l1.8 1.5" stroke="#c5c5c5" stroke-width="1.1" fill="none"/></svg><div class="a" style="left:16px;top:394px;width:42px;height:42px"><svg width="42" height="42" viewBox="0 0 42 42"><rect width="42" height="42" rx="3.5" fill="#fbfbfb"/><text x="3" y="20.5" font-family="Liberation Sans" font-style="italic" font-weight="700" font-size="16" fill="#4a4a4a">M</text><path d="M21 12h12.5a3.5 3.5 0 0 1 0 7H31" stroke="#4a4a4a" stroke-width="2.2" fill="none"/><path d="M8 22c1 6 5 9 11 9 5 0 9-2 11-6" stroke="#4a4a4a" stroke-width="2.2" fill="none"/><path d="M31 15.5c.5 5-1.5 10.5-6 14" stroke="#d4141a" stroke-width="2.6" fill="none"/><path d="M6.5 34.5h26" stroke="#4a4a4a" stroke-width="2.4"/></svg></div><div class="a" style="left:71.10px;top:396px;font-size:13.0px;line-height:0;white-space:pre;color:#e7e7e7;letter-spacing:-0.023px;font-weight:700;">Maven for Java</div><div class="a" style="left:70.90px;top:415px;font-size:13.0px;line-height:0;white-space:pre;color:#c4c4c4;letter-spacing:-0.084px;">Manage Maven projects, execute goals, gen...</div><svg style="left:72.8px;top:427px" width="14" height="14" viewBox="0 0 14 14"><path d="M7 .5l1.6 1.3 2-.2.5 2 1.8 1-.8 1.9.8 1.9-1.8 1-.5 2-2-.2L7 13.5l-1.6-1.3-2 .2-.5-2-1.8-1 .8-1.9L1.1 5.6l1.8-1 .5-2 2 .2z" fill="#3794ff"/><path d="M4.3 7.2 6.2 9l3.6-3.8" stroke="#1b2a40" stroke-width="1.4" fill="none"/></svg><div class="a" style="left:87.90px;top:435px;font-size:13.0px;line-height:0;white-space:pre;color:#cccccc;letter-spacing:-0.062px;-webkit-text-stroke:0.15px #cccccc">Microsoft</div><svg style="left:315px;top:427px" width="15" height="15" viewBox="0 0 16 16"><path d="M6.8 1h2.4l.4 2 1.4.8 1.9-.7 1.2 2.1-1.5 1.3v1.6l1.5 1.3-1.2 2.1-1.9-.7-1.4.8-.4 2H6.8l-.4-2-1.4-.8-1.9.7-1.2-2.1 1.5-1.3V7.5L1.9 6.2l1.2-2.1 1.9.7 1.4-.8z" stroke="#d0d0d0" stroke-width="1.5" fill="none" stroke-linejoin="round"/><circle cx="8" cy="8.3" r="2" stroke="#d0d0d0" stroke-width="1.4" fill="none"/></svg><div class="a" style="left:16px;top:466px;width:42px;height:42px"><svg width="42" height="42" viewBox="0 0 42 42"><defs><linearGradient id="el" x1="0" y1="0" x2="0" y2="1"><stop offset="0" stop-color="#9aa3e0"/><stop offset="1" stop-color="#6670bd"/></linearGradient></defs><path d="M4.5 34V23c0-7 3.5-12 9-12.5 2-1.5 4-1.5 6-.8 5-.7 10-.2 14 1.8 3 1.5 4.5 4 4.8 7.5l.2 6.5c0 2-.5 3-1.5 3.5V35h-5v-4.5h-7V35h-5v-5c-2 0-3.5-1-4.2-2.2-1.3.6-2.8.6-3.8-.3V34z" fill="url(#el)" stroke="#4d579e" stroke-width=".8"/><path d="M38.5 17l2.2-2.5" stroke="#6670bd" stroke-width="1.2"/><path d="M12.5 13c-2 2-2.5 5-2 8" stroke="#c3c9f0" stroke-width="1.2" fill="none"/><text x="17.5" y="23.5" font-family="Liberation Sans" font-style="italic" font-weight="700" font-size="9" fill="#232a5c">php</text></svg></div><div class="a" style="left:71.10px;top:468px;font-size:13.0px;line-height:0;white-space:pre;color:#e7e7e7;letter-spacing:-0.013px;font-weight:700;">PHP Intelephense</div><div class="a" style="left:70.90px;top:487px;font-size:13.0px;line-height:0;white-space:pre;color:#c4c4c4;letter-spacing:-0.056px;">PHP code intelligence for Visual Studio Code</div><svg style="left:72.8px;top:499px" width="14" height="14" viewBox="0 0 14 14"><path d="M7 .5l1.6 1.3 2-.2.5 2 1.8 1-.8 1.9.8 1.9-1.8 1-.5 2-2-.2L7 13.5l-1.6-1.3-2 .2-.5-2-1.8-1 .8-1.9L1.1 5.6l1.8-1 .5-2 2 .2z" fill="#3794ff"/><path d="M4.3 7.2 6.2 9l3.6-3.8" stroke="#1b2a40" stroke-width="1.4" fill="none"/></svg><div class="a" style="left:88.00px;top:507px;font-size:12.75px;line-height:0;white-space:pre;color:#cccccc;letter-spacing:-0.280px;-webkit-text-stroke:0.15px #cccccc">Ben Mewburn</div><svg style="left:315px;top:499px" width="15" height="15" viewBox="0 0 16 16"><path d="M6.8 1h2.4l.4 2 1.4.8 1.9-.7 1.2 2.1-1.5 1.3v1.6l1.5 1.3-1.2 2.1-1.9-.7-1.4.8-.4 2H6.8l-.4-2-1.4-.8-1.9.7-1.2-2.1 1.5-1.3V7.5L1.9 6.2l1.2-2.1 1.9.7 1.4-.8z" stroke="#d0d0d0" stroke-width="1.5" fill="none" stroke-linejoin="round"/><circle cx="8" cy="8.3" r="2" stroke="#d0d0d0" stroke-width="1.4" fill="none"/></svg><div class="a" style="left:299.30px;top:468px;font-size:10.5px;line-height:0;white-space:pre;color:#c5c5c5;letter-spacing:0.000px;font-weight:700;">116ms</div><svg style="left:285.0px;top:462px" width="12" height="12" viewBox="0 0 12 12"><path d="M2.2 3.3A4.8 4.8 0 1 1 1.2 6" stroke="#c5c5c5" stroke-width="1.1" fill="none"/><path d="M1.2 1.5v2.3h2.3M6 3.3V6l1.8 1.5" stroke="#c5c5c5" stroke-width="1.1" fill="none"/></svg><div class="a" style="left:16px;top:539px;width:42px;height:42px;background:#0f3a5a;opacity:.6"></div><div class="a" style="left:16px;top:618px;width:42px;height:28px;border-radius:21px;background:#3a7fc8"></div><div class="a" style="left:16px;top:682px;width:42px;height:42px;border-radius:3px;background:#f0f0f0"></div><div class="a" style="left:0;top:770px;width:343px;height:1px;background:#2b2b2b"></div><svg style="left:5px;top:779px" width="11" height="7" viewBox="0 0 11 7"><path d="M1 1l4.5 4.5L10 1" stroke="#c5c5c5" stroke-width="1.2" fill="none"/></svg><div class="a" style="left:16px;top:755px;width:42px;height:15px;background:#2a2140"></div><svg style="left:0px;top:803px" width="22" height="28" viewBox="0 0 22 28"><path d="M0 0h22L0 28z" fill="#1f72d0"/><path d="M7 4l1.3 2.8 3 .3-2.3 2 .7 3L7 10.5 4.3 12l.7-3-2.3-2 3-.3z" fill="#fff"/></svg><svg style="left:0px;top:875px" width="22" height="28" viewBox="0 0 22 28"><path d="M0 0h22L0 28z" fill="#1f72d0"/><path d="M7 4l1.3 2.8 3 .3-2.3 2 .7 3L7 10.5 4.3 12l.7-3-2.3-2 3-.3z" fill="#fff"/></svg><div class="a" style="left:16px;top:845px;font-size:13px;color:#3794ff">c</div></div><div class="a" style="left:1528px;top:143px;width:343px;height:4px;background:linear-gradient(#000,rgba(0,0,0,0))"></div><div class="a" style="left:1872px;top:35px;width:48px;height:997px;background:#181818"></div><svg style="left:1885px;top:46px" width="22" height="26" viewBox="0 0 22 26"><path d="M7 6V2.5A1.5 1.5 0 0 1 8.5 1H16l5 5v11.5A1.5 1.5 0 0 1 19.5 19H16" stroke="#868686" stroke-width="1.5" fill="none"/><path d="M16 1v5h5" stroke="#868686" stroke-width="1.5" fill="none"/><rect x="1" y="7" width="14" height="18" rx="1.5" stroke="#868686" stroke-width="1.5" fill="none"/></svg><svg style="left:1884px;top:95px" width="24" height="24" viewBox="0 0 24 24"><circle cx="14.5" cy="9.5" r="7.5" stroke="#868686" stroke-width="1.6" fill="none"/><path d="M9 15 1.5 22.5" stroke="#868686" stroke-width="1.8"/></svg><svg style="left:1886px;top:142px" width="20" height="25" viewBox="0 0 20 25"><circle cx="4.5" cy="3.5" r="2.8" stroke="#868686" stroke-width="1.5" fill="none"/><circle cx="4.5" cy="21.5" r="2.8" stroke="#868686" stroke-width="1.5" fill="none"/><circle cx="15.5" cy="8.5" r="2.8" stroke="#868686" stroke-width="1.5" fill="none"/><path d="M4.5 6.3v12.4M15.5 11.3c0 4-5 4-11 7.5" stroke="#868686" stroke-width="1.5" fill="none"/></svg><svg style="left:1880px;top:186px" width="32" height="34" viewBox="0 0 32 34"><path d="M11.5 15V5.5L27.5 14.5 17.5 20.5" stroke="#868686" stroke-width="1.5" fill="none" stroke-linejoin="round"/><ellipse cx="10" cy="23" rx="4.3" ry="5" stroke="#868686" stroke-width="1.5" fill="none"/><path d="M5.7 22.5h8.6M4 19l2 1.5M16 19l-2 1.5M3.5 23h2.2M14.3 23h2.2M4 27.5l2-1.5M16 27.5l-2-1.5M7 17.5l1.2 1.3M13 17.5l-1.2 1.3" stroke="#868686" stroke-width="1.4"/></svg><svg style="left:1880px;top:236px" width="32" height="30" viewBox="0 0 32 30"><path d="M5 8.5h8.8v8.8H24.3v8.2a1 1 0 0 1-1 1H5a1 1 0 0 1-1-1V9.5a1 1 0 0 1 1-1z" stroke="#d7d7d7" stroke-width="1.6" fill="none" stroke-linejoin="round"/><path d="M4 17.3h9.8M13.8 17.3v9.2" stroke="#d7d7d7" stroke-width="1.6"/><rect x="18.2" y="4" width="9.5" height="8.7" rx="1.5" stroke="#d7d7d7" stroke-width="1.6" fill="none"/></svg><div class="a" style="left:1918px;top:227px;width:2px;height:48px;background:#0078d4"></div><svg style="left:1882px;top:284px" width="28" height="29" viewBox="0 0 28 29"><circle cx="14" cy="14.5" r="11.8" stroke="#868686" stroke-width="1.4" fill="none"/><circle cx="12" cy="8.7" r="1.9" fill="#868686"/><circle cx="12" cy="20.6" r="1.9" fill="#868686"/><circle cx="18.4" cy="15.2" r="1.9" fill="#868686"/><path d="M12 8.7v11.9M12 8.7l6.4 6.5" stroke="#868686" stroke-width="1.4" fill="none"/></svg><div class="a" style="left:0;top:1032px;width:1920px;height:48px;background:#202020"></div><div class="a" style="left:0;top:1032px;width:90px;height:48px;background:radial-gradient(ellipse 80px 60px at 0% 20%,rgba(20,70,130,.5),rgba(20,70,130,0) 100%)"></div><svg style="left:16px;top:1045px" width="24" height="21" viewBox="0 0 24 21"><rect x=".5" y=".5" width="23" height="20" rx="2" fill="#1565c0"/><rect x="3" y="3" width="8" height="15" rx="1" fill="#f2f2f2"/><rect x="13" y="3" width="8" height="8" fill="#6fd3ff"/><rect x="13" y="11.5" width="8" height="3" fill="#3fb0f0"/><rect x="13" y="15" width="8" height="3" fill="#1e90e8"/></svg><svg style="left:705px;top:1045px" width="23" height="23" viewBox="0 0 23 23"><defs><linearGradient id="wl" x1="0" y1="0" x2="1" y2="1"><stop offset="0" stop-color="#7ee3ff"/><stop offset="1" stop-color="#1a9af0"/></linearGradient></defs><rect x="0" y="0" width="11" height="11" fill="url(#wl)"/><rect x="12" y="0" width="11" height="11" fill="url(#wl)"/><rect x="0" y="12" width="11" height="11" fill="url(#wl)"/><rect x="12" y="12" width="11" height="11" fill="url(#wl)"/></svg><div class="a" style="left:740px;top:1040px;width:220px;height:32px;border-radius:16px;background:#303030;border:1px solid #383838"></div><svg style="left:752px;top:1048px" width="15" height="16" viewBox="0 0 15 16"><circle cx="9" cy="6" r="5" stroke="#dcdcdc" stroke-width="1.6" fill="#4a4a4a"/><path d="M5.5 9.5 1 14.5" stroke="#dcdcdc" stroke-width="2" stroke-linecap="round"/></svg><div class="a" style="left:776.40px;top:1057px;font-size:13.75px;line-height:0;white-space:pre;color:#e3e3e3;letter-spacing:-0.260px;">Search</div><svg style="left:907px;top:1042px" width="47" height="26" viewBox="0 0 47 26"><ellipse cx="23" cy="22" rx="22" ry="4" fill="#8a9a2a"/><ellipse cx="26" cy="13" rx="11" ry="7" fill="#efe6d6"/><circle cx="14" cy="8" r="4.5" fill="#e8dcc6"/><path d="M10 5c-2-3 1-5 3-3M17 4c2-3 5-1 3 2" stroke="#c08a40" stroke-width="1.6" fill="none"/><path d="M20 19v5M30 19v5" stroke="#888" stroke-width="1.2"/></svg><svg style="left:972px;top:1044px" width="25" height="23" viewBox="0 0 25 23"><rect x="0" y="7" width="17" height="16" rx="1.5" fill="#6e6e6e"/><rect x="8" y="0" width="17" height="16" rx="1.5" fill="#f0f0f0"/><rect x="8" y="7" width="9" height="9" fill="#b8b8b8"/></svg><svg style="left:1016px;top:1044px" width="24" height="24" viewBox="0 0 24 24"><defs><linearGradient id="tm" x1="0" y1="0" x2="1" y2="1"><stop offset="0" stop-color="#8a7ff0"/><stop offset="1" stop-color="#5b4fd0"/></linearGradient></defs><path d="M12 1a11 11 0 1 1-6.5 19.9L1 23l1.6-4.6A11 11 0 0 1 12 1z" fill="url(#tm)"/><rect x="6" y="8" width="8.5" height="8" rx="1.5" fill="#fff"/><path d="M15 10.5 18.5 8.5v7L15 13.5z" fill="#fff"/></svg><svg style="left:1060px;top:1045px" width="25" height="21" viewBox="0 0 25 21"><path d="M0 2a2 2 0 0 1 2-2h7l2.5 2.5H23a2 2 0 0 1 2 2V19a2 2 0 0 1-2 2H2a2 2 0 0 1-2-2z" fill="#f3c33a"/><path d="M0 6h25v13a2 2 0 0 1-2 2H2a2 2 0 0 1-2-2z" fill="#ffd85c"/><path d="M6 21v-5a1.5 1.5 0 0 1 1.5-1.5h10A1.5 1.5 0 0 1 19 16v5z" fill="#1a7fd8"/><rect x="8.5" y="17" width="8" height="1.6" fill="#0f5aa8"/></svg><div class="a" style="left:1068px;top:1073px;width:8px;height:3px;border-radius:2px;background:#9a9a9a"></div><svg style="left:1104px;top:1044px" width="25" height="25" viewBox="0 0 24 24"><path d="M12 12L1.12 6.93A12 12 0 0 1 23.95 10.95z" fill="#e94235"/><path d="M12 12L23.95 10.95A12 12 0 0 1 8.89 23.59z" fill="#fbc116"/><path d="M12 12L8.89 23.59A12 12 0 0 1 1.12 6.93z" fill="#1fa046"/><circle cx="12" cy="12" r="5.3" fill="#fff"/><circle cx="12" cy="12" r="4.3" fill="#2c7ce6"/></svg><svg style="left:1117px;top:1039px" width="17" height="17" viewBox="0 0 17 17"><circle cx="8.5" cy="8.5" r="8" fill="#bfc2bd"/><path d="M1.5 6c2-1.5 4-1.5 6-1" stroke="#7e9a5a" stroke-width="2" fill="none"/><ellipse cx="8" cy="10" rx="2.6" ry="5" fill="#2a2d33"/><path d="M5 15l3-5 3 5" stroke="#2a2d33" stroke-width="1.5" fill="none"/></svg><div class="a" style="left:1113px;top:1073px;width:8px;height:3px;border-radius:2px;background:#9a9a9a"></div><svg style="left:1148px;top:1044px" width="25" height="25" viewBox="0 0 100 100"><path fill="#0065a9" d="M96.5 10.8 75.9.9a6.2 6.2 0 0 0-7.1 1.2L29.4 38 12.2 25a4.2 4.2 0 0 0-5.3.2L1.4 30.2a4.2 4.2 0 0 0 0 6.2L16.3 50 1.4 63.6a4.2 4.2 0 0 0 0 6.2l5.5 5a4.2 4.2 0 0 0 5.3.2l17.2-13 39.4 35.9a6.2 6.2 0 0 0 7.1 1.2l20.6-9.9a6.2 6.2 0 0 0 3.5-5.6V16.4a6.2 6.2 0 0 0-3.5-5.6ZM75 72.7 45.1 50 75 27.3Z"/><path fill="#007acc" d="M96.5 10.8 75.9.9a6.2 6.2 0 0 0-7.1 1.2L1.4 63.6a4.2 4.2 0 0 0 0 6.2l5.5 5a4.2 4.2 0 0 0 5.3.2L93.4 13.5a4.2 4.2 0 0 1 6.6 3.3v-.4a6.2 6.2 0 0 0-3.5-5.6Z"/><path fill="#1f9cf0" d="M96.5 89.2 75.9 99.1a6.2 6.2 0 0 1-7.1-1.2L1.4 36.4a4.2 4.2 0 0 1 0-6.2l5.5-5a4.2 4.2 0 0 1 5.3-.2l81.2 61.5a4.2 4.2 0 0 0 6.6-3.3v.4a6.2 6.2 0 0 1-3.5 5.6Z"/></svg><div class="a" style="left:1157px;top:1073px;width:8px;height:3px;border-radius:2px;background:#9a9a9a"></div><svg style="left:1192px;top:1044px" width="25" height="25" viewBox="0 0 25 25"><rect width="25" height="25" rx="2" fill="#f37d2a"/><path d="M7 6c3-1 5 2 5.5 4 .5-2 2.5-5 5.5-4 3 1 1.5 5-1.5 6.5 3 1.5 4.5 5.5 1.5 6.5-3 1-5-2-5.5-4-.5 2-2.5 5-5.5 4-3-1-1.5-5 1.5-6.5C5.5 11 4 7 7 6z" stroke="#fff" stroke-width="2.2" fill="none"/></svg><div class="a" style="left:1201px;top:1073px;width:8px;height:3px;border-radius:2px;background:#9a9a9a"></div><div class="a" style="left:1816.50px;top:1069px;font-size:12.0px;line-height:0;white-space:pre;color:#e0e0e0;letter-spacing:-0.011px;">03/02/2025</div><div class="a" style="left:1548px;top:673px;width:360px;height:395px;border-radius:8px;border:1px solid #3d3d3d;background:#2b2b2b;overflow:hidden"><div class="a" style="left:-60px;top:120px;width:220px;height:300px;background:radial-gradient(ellipse at 20% 65%,rgba(40,80,120,.22),rgba(40,80,120,0) 70%)"></div><div class="a" style="left:220px;top:250px;width:200px;height:200px;background:radial-gradient(ellipse at 70% 80%,rgba(40,70,100,.2),rgba(40,70,100,0) 70%)"></div><div class="a" style="left:0;top:345px;width:360px;height:50px;background:rgba(22,23,25,.55);border-top:1px solid #262626"></div></div><svg style="left:1564px;top:690px" width="14" height="13" viewBox="0 0 14 13"><path d="M13 6.5H1.5M6.5 1 1 6.5 6.5 12" stroke="#e0e0e0" stroke-width="1.2" fill="none"/></svg><div class="a" style="left:1594.20px;top:697px;font-size:14.0px;line-height:0;white-space:pre;color:#f3f3f3;letter-spacing:0.050px;">Project</div><div class="a" style="left:1646px;top:690px;width:16px;height:15px;border:1px solid #777;border-radius:3px"></div><svg style="left:1650px;top:694px" width="8" height="8" viewBox="0 0 8 8"><rect x="0" y="0" width="3.5" height="3.5" fill="#cfcfcf"/><rect x="4.5" y="0" width="3.5" height="3.5" fill="#cfcfcf"/><rect x="0" y="4.5" width="3.5" height="3.5" fill="#cfcfcf"/><rect x="4.5" y="4.5" width="3.5" height="3.5" fill="#cfcfcf"/></svg><div class="a" style="left:1663px;top:690px;font-size:11px;line-height:14px;color:#bdbdbd">+</div><div class="a" style="left:1670px;top:690px;width:16px;height:15px;border:1px solid #777;border-radius:3px;font-size:10px;line-height:13px;text-align:center;color:#d0d0d0">P</div><svg style="left:1565px;top:744px" width="17" height="13" viewBox="0 0 17 13"><path d="M2.5 10.5V3a1.8 1.8 0 0 1 1.8-1.8h8.4A1.8 1.8 0 0 1 14.5 3v7.5z" stroke="#ececec" stroke-width="1.1" fill="none"/><path d="M6.5 10 C6.5 6 9 3.5 13.5 3.2" stroke="#ececec" stroke-width="1.1" fill="none"/><path d="M.5 12.3h16" stroke="#ececec" stroke-width="1.2"/></svg><svg style="left:1583px;top:741px" width="17" height="13" viewBox="0 0 17 13"><rect x=".6" y=".6" width="15.8" height="11.8" rx="2.2" stroke="#a8a8a8" stroke-width="1.1" fill="none"/></svg><div class="a" style="left:1610.20px;top:751px;font-size:13.75px;line-height:0;white-space:pre;color:#f3f3f3;letter-spacing:-0.200px;">PC screen only</div><svg style="left:1565px;top:802px" width="17" height="13" viewBox="0 0 17 13"><path d="M2.5 10.5V3a1.8 1.8 0 0 1 1.8-1.8h8.4A1.8 1.8 0 0 1 14.5 3v7.5z" stroke="#ececec" stroke-width="1.1" fill="none"/><path d="M6.5 10 C6.5 6 9 3.5 13.5 3.2" stroke="#ececec" stroke-width="1.1" fill="none"/><path d="M.5 12.3h16" stroke="#ececec" stroke-width="1.2"/></svg><svg style="left:1583px;top:799px" width="17" height="13" viewBox="0 0 17 13"><rect x=".6" y=".6" width="15.8" height="11.8" rx="2.2" stroke="#ececec" stroke-width="1.1" fill="none"/><path d="M7 12.4C7 7 10 3.8 16.3 3.5" stroke="#ececec" stroke-width="1.1" fill="none"/></svg><div class="a" style="left:1610.20px;top:808px;font-size:14.0px;line-height:0;white-space:pre;color:#f3f3f3;letter-spacing:0.125px;">Duplicate</div><svg style="left:1565px;top:861px" width="17" height="13" viewBox="0 0 17 13"><path d="M2.5 10.5V3a1.8 1.8 0 0 1 1.8-1.8h8.4A1.8 1.8 0 0 1 14.5 3v7.5z" stroke="#ececec" stroke-width="1.1" fill="none"/><path d="M6.5 10 C6.5 6 9 3.5 13.5 3.2" stroke="#ececec" stroke-width="1.1" fill="none"/><path d="M.5 12.3h16" stroke="#ececec" stroke-width="1.2"/></svg><svg style="left:1583px;top:858px" width="17" height="13" viewBox="0 0 17 13"><rect x=".6" y=".6" width="15.8" height="11.8" rx="2.2" stroke="#ececec" stroke-width="1.1" fill="none"/><path d="M.7 3.8C6.5 3.8 10 7 10 12.4" stroke="#ececec" stroke-width="1.1" fill="none"/></svg><div class="a" style="left:1610.20px;top:868px;font-size:13.75px;line-height:0;white-space:pre;color:#f3f3f3;letter-spacing:-0.060px;">Extend</div><div class="a" style="left:1553px;top:897px;width:350px;height:53px;border-radius:4px;background:#383838"></div><div class="a" style="left:1553px;top:915px;width:3px;height:17px;border-radius:2px;background:#60cdff"></div><svg style="left:1565px;top:919px" width="17" height="13" viewBox="0 0 17 13"><path d="M2.5 10.5V3a1.8 1.8 0 0 1 1.8-1.8h8.4A1.8 1.8 0 0 1 14.5 3v7.5z" stroke="#8c8c8c" stroke-width="1.1" fill="none"/><path d="M.5 12.3h16" stroke="#8c8c8c" stroke-width="1.2"/></svg><svg style="left:1583px;top:916px" width="17" height="13" viewBox="0 0 17 13"><rect x=".6" y=".6" width="15.8" height="11.8" rx="2.2" stroke="#ececec" stroke-width="1.1" fill="none"/><path d="M7 12.4C7 7 10 3.8 16.3 3.5" stroke="#ececec" stroke-width="1.1" fill="none"/></svg><div class="a" style="left:1610.70px;top:926px;font-size:13.75px;line-height:0;white-space:pre;color:#f3f3f3;letter-spacing:-0.112px;">Second screen only</div><div class="a" style="left:1563.30px;top:1045px;font-size:12.75px;line-height:0;white-space:pre;color:#b4b4b4;letter-spacing:-0.210px;">More Display settings</div></body></html>
